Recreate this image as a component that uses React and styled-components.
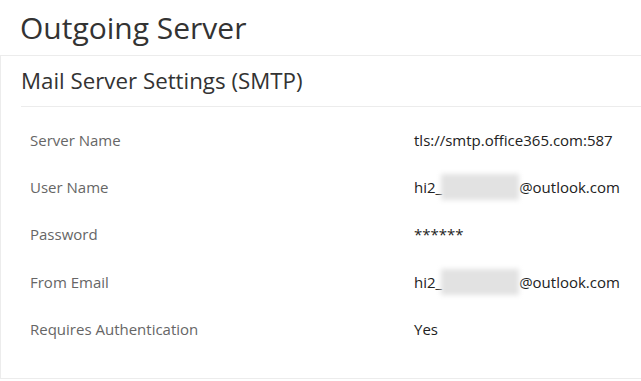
import React from 'react';
import styled, { createGlobalStyle } from 'styled-components';

const GlobalStyle = createGlobalStyle`
  body {
    margin: 0;
    background: #fff;
    font-family: "Open Sans", "Liberation Sans", sans-serif;
    color: #333;
  }
`;

const rows = [
  { label: 'Server Name', value: 'tls://smtp.office365.com:587' },
  { label: 'User Name', value: 'email' },
  { label: 'Password', value: '******' },
  { label: 'From Email', value: 'email' },
  { label: 'Requires Authentication', value: 'Yes' },
];

const App = () => {
  return (
    <>
      <GlobalStyle />
      <Page>
        <Title>Outgoing Server</Title>
        <Panel>
          <PanelHeader>Mail Server Settings (SMTP)</PanelHeader>
          <Table>
            {rows.map(row => (
              <Row key={row.label}>
                <Label>{row.label}</Label>
                <Value>
                  {row.value === 'email' ? (
                    <>hi2_<Blurred />@outlook.com</>
                  ) : row.value}
                </Value>
              </Row>
            ))}
          </Table>
        </Panel>
      </Page>
    </>
  );
};

export default App;

const Page = styled.div`
  width: 641px;
  height: 381px;
  overflow: hidden;
`;

const Title = styled.h1`
  margin: 0;
  height: 55px;
  box-sizing: border-box;
  padding: 8px 0 0 20px;
  font-size: 30px;
  font-weight: 400;
  line-height: 40px;
  color: #333;
`;

const Panel = styled.div`
  border: 1px solid #ececec;
  border-right: none;
  padding: 0 0 26px 20px;
`;

const PanelHeader = styled.h2`
  margin: 0;
  height: 51px;
  box-sizing: border-box;
  border-bottom: 1px solid #ececec;
  font-size: 22.3px;
  font-weight: 400;
  line-height: 50px;
  color: #333;
`;

const Table = styled.div`
  display: flex;
  flex-direction: column;
  padding-top: 9px;
`;

const Row = styled.div`
  display: grid;
  grid-template-columns: 384px 1fr;
  height: 47.3px;
  align-items: center;
  padding-left: 9px;
  font-size: 15px;
`;

const Label = styled.div`
  color: #666;
`;

const Value = styled.div`
  color: #222;
  display: flex;
  align-items: center;
`;

const Blurred = styled.span`
  display: inline-block;
  width: 78px;
  height: 26px;
  margin-left: -1px;
  background: #e2e2e2;
  filter: blur(2.5px);
`;
